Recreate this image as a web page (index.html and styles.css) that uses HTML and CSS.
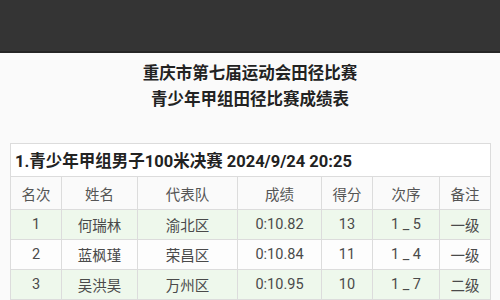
FILE: index.html
```html
<!DOCTYPE html>
<html lang="zh-CN">
<head>
<meta charset="utf-8">
<link rel="stylesheet" href="styles.css">
</head>
<body>
<div class="topbar"></div>
<div class="heading">
  <div>重庆市第七届运动会田径比赛</div>
  <div>青少年甲组田径比赛成绩表</div>
</div>
<table class="results">
  <colgroup>
    <col class="c1"><col class="c2"><col class="c3"><col class="c4"><col class="c5"><col class="c6"><col class="c7">
  </colgroup>
  <tr class="caption"><td colspan="7">1.青少年甲组男子100米决赛 2024/9/24 20:25</td></tr>
  <tr class="head"><td>名次</td><td>姓名</td><td>代表队</td><td>成绩</td><td>得分</td><td>次序</td><td>备注</td></tr>
  <tr class="odd"><td>1</td><td>何瑞林</td><td>渝北区</td><td>0:10.82</td><td>13</td><td>1 _ 5</td><td>一级</td></tr>
  <tr class="even"><td>2</td><td>蓝枫瑾</td><td>荣昌区</td><td>0:10.84</td><td>11</td><td>1 _ 4</td><td>一级</td></tr>
  <tr class="odd"><td>3</td><td>吴洪昊</td><td>万州区</td><td>0:10.95</td><td>10</td><td>1 _ 7</td><td>二级</td></tr>
</table>
</body>
</html>
```
FILE: styles.css
```css
html, body {
  margin: 0;
  padding: 0;
  background: #fafafa;
  font-family: Roboto, "Noto Sans CJK SC", sans-serif;
  overflow: hidden;
}
.topbar {
  height: 51px;
  background: #343434;
  border-bottom: 2px solid #262626;
}
.heading {
  padding-top: 8px;
  text-align: center;
  color: #222;
  font-weight: bold;
  font-size: 16.5px;
  line-height: 26px;
}
.results {
  margin: 30px 0 0 10px;
  width: 481px;
  border-collapse: collapse;
  table-layout: fixed;
  color: #4a4a4a;
  font-size: 14.5px;
}
.c1 { width: 51px; }
.c2 { width: 76px; }
.c3 { width: 100px; }
.c4 { width: 84px; }
.c5 { width: 51px; }
.c6 { width: 67px; }
.c7 { width: 51px; }
.results td {
  border: 1px solid #dcdcdc;
  text-align: center;
  height: 29px;
  padding: 0;
}
.caption td {
  text-align: left;
  padding-left: 4px;
  height: 32px;
  font-weight: bold;
  font-size: 16.5px;
  color: #222;
  background: #fff;
}
.head td {
  height: 32px;
  background: #fafafa;
  color: #555;
}
.odd td { background: #eef8ec; }
.even td { background: #fdfdfd; }
```
